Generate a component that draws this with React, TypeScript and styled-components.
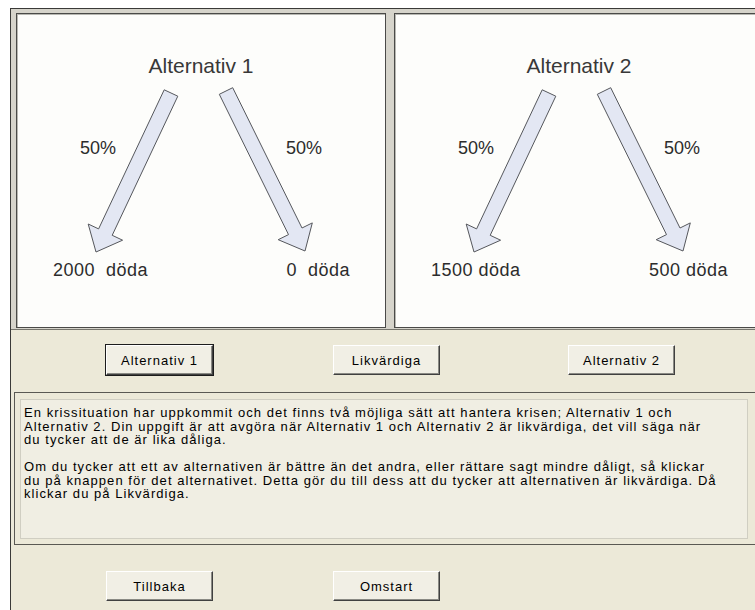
import React from 'react';
import styled, { createGlobalStyle } from 'styled-components';

const GlobalStyle = createGlobalStyle`
  html, body {
    margin: 0;
    padding: 0;
    background: #ffffff;
    overflow: hidden;
  }
  body {
    font-family: "Liberation Sans", Arial, sans-serif;
  }
`;

type Point = [number, number];

// block arrow from start to tip, returned as a polygon point list
const arrowPoints = (start: Point, tip: Point) => {
  const shaft = 7.5;
  const headWidth = 19;
  const headLength = 22;
  const dx = tip[0] - start[0];
  const dy = tip[1] - start[1];
  const len = Math.sqrt(dx * dx + dy * dy);
  const ux = dx / len;
  const uy = dy / len;
  const nx = -uy;
  const ny = ux;
  const bx = tip[0] - ux * headLength;
  const by = tip[1] - uy * headLength;
  const pts: Point[] = [
    [start[0] + nx * shaft, start[1] + ny * shaft],
    [bx + nx * shaft, by + ny * shaft],
    [bx + nx * headWidth, by + ny * headWidth],
    tip,
    [bx - nx * headWidth, by - ny * headWidth],
    [bx - nx * shaft, by - ny * shaft],
    [start[0] - nx * shaft, start[1] - ny * shaft],
  ];
  return pts.map(p => `${p[0].toFixed(1)},${p[1].toFixed(1)}`).join(' ');
};

interface Scenario {
  title: string;
  left: string;
  right: string;
}

const scenarios: Scenario[] = [
  { title: 'Alternativ 1', left: '2000  döda', right: '0  döda' },
  { title: 'Alternativ 2', left: '1500 döda', right: '500 döda' },
];

const ScenarioPanel: React.FC<{ scenario: Scenario }> = ({ scenario }) => (
  <Panel>
    <Arrows viewBox="0 0 370 315" width={370} height={315}>
      <polygon points={arrowPoints([155, 80], [80, 239])} />
      <polygon points={arrowPoints([210, 78], [289, 238])} />
    </Arrows>
    <PanelTitle>{scenario.title}</PanelTitle>
    <PercentRow>
      <span>50%</span>
      <span>50%</span>
    </PercentRow>
    <OutcomeRow>
      <span>{scenario.left}</span>
      <span>{scenario.right}</span>
    </OutcomeRow>
  </Panel>
);

const App: React.FC = () => {
  return (
    <>
      <GlobalStyle />
      <Window>
        <TopSection>
          {scenarios.map(s => (
            <ScenarioPanel key={s.title} scenario={s} />
          ))}
        </TopSection>

        <ButtonRow>
          <Button $default>Alternativ 1</Button>
          <Button>Likvärdiga</Button>
          <Button>Alternativ 2</Button>
        </ButtonRow>

        <GroupBox>
          <TextBox>
            <p>
              En krissituation har uppkommit och det finns två möjliga sätt att hantera krisen; Alternativ 1 och
              <br />
              Alternativ 2. Din uppgift är att avgöra när Alternativ 1 och Alternativ 2 är likvärdiga, det vill säga när
              <br />
              du tycker att de är lika dåliga.
            </p>
            <p>
              Om du tycker att ett av alternativen är bättre än det andra, eller rättare sagt mindre dåligt, så klickar
              <br />
              du på knappen för det alternativet. Detta gör du till dess att du tycker att alternativen är likvärdiga. Då
              <br />
              klickar du på Likvärdiga.
            </p>
          </TextBox>
        </GroupBox>

        <ButtonRow $bottom>
          <Button>Tillbaka</Button>
          <Button>Omstart</Button>
        </ButtonRow>
      </Window>
    </>
  );
};

const Window = styled.div`
  margin: 8px 0 0 10px;
  width: 800px;
  height: 640px;
  border-top: 1px solid #3a3a38;
  border-left: 1px solid #3a3a38;
  background-color: #ece9d8;
`;

const TopSection = styled.div`
  display: flex;
  gap: 8px;
  padding: 4px 0 1px 5px;
  background-color: #d6d4cb;
  border-bottom: 1px solid #77766e;
`;

const Panel = styled.div`
  position: relative;
  box-sizing: border-box;
  flex: 0 0 370px;
  height: 315px;
  display: flex;
  flex-direction: column;
  background-color: #fdfdfb;
  border: 1px solid #4a4a48;
  box-shadow: inset 1px 1px 0 #b8b8b2;
  color: #2c2c2c;
`;

const Arrows = styled.svg`
  position: absolute;
  left: -1px;
  top: -1px;

  polygon {
    fill: #e3e7f3;
    stroke: #55575c;
    stroke-width: 1;
    stroke-linejoin: miter;
  }
`;

const PanelTitle = styled.div`
  position: relative;
  padding-top: 40px;
  text-align: center;
  font-size: 21px;
  line-height: 24px;
  color: #383838;
`;

const PercentRow = styled.div`
  position: relative;
  display: flex;
  justify-content: space-between;
  margin-top: 60px;
  padding: 0 63px 0 63px;
  font-size: 18px;
  line-height: 21px;
`;

const OutcomeRow = styled.div`
  position: relative;
  display: flex;
  justify-content: space-between;
  margin-top: 101px;
  padding: 0 35px 0 36px;
  font-size: 18px;
  line-height: 21px;
  letter-spacing: 0.5px;
  white-space: pre;
`;

const ButtonRow = styled.div<{ $bottom?: boolean }>`
  display: grid;
  grid-template-columns: 227px 235px 1fr;
  align-items: start;
  padding-left: 95px;
  margin-top: ${props => (props.$bottom ? '26px' : '15px')};
`;

const Button = styled.button<{ $default?: boolean }>`
  box-sizing: border-box;
  width: 107px;
  height: 30px;
  padding: 0;
  font-family: "Liberation Sans", Arial, sans-serif;
  font-size: 13px;
  letter-spacing: 1px;
  color: #000;
  background-color: #f1efe5;
  border: 1px solid;
  border-color: #ffffff #404040 #404040 #ffffff;
  box-shadow: ${props =>
    props.$default
      ? '0 0 0 1px #1c1c1c, inset -1px -1px 0 #8a8a84'
      : 'inset -1px -1px 0 #8a8a84'};
  border-radius: 0;
  cursor: pointer;
`;

const GroupBox = styled.div`
  box-sizing: border-box;
  width: 800px;
  margin: 17px 0 0 3px;
  padding: 6px 0 5px 5px;
  border: 1px solid #5a5953;
  border-right: none;
`;

const TextBox = styled.div`
  box-sizing: border-box;
  width: 728px;
  height: 140px;
  padding: 6px 3px;
  background-color: #f0eee3;
  border: 1px solid #d0cec2;
  font-size: 13px;
  line-height: 13.5px;
  letter-spacing: 1.05px;
  color: #000;
  white-space: nowrap;

  p {
    margin: 0 0 13.5px 0;
  }
`;

export default App;
